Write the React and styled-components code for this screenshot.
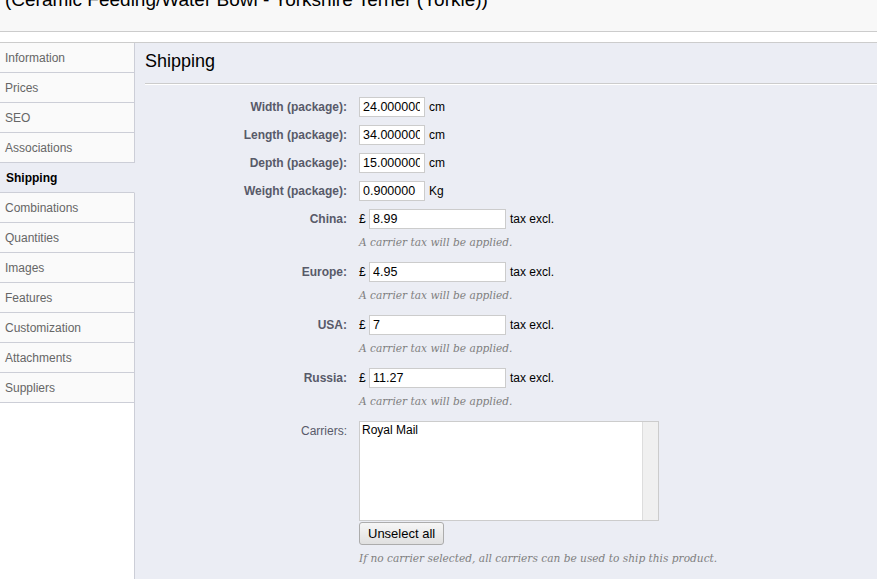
import styled, { createGlobalStyle } from "styled-components";

const GlobalStyle = createGlobalStyle`
  html, body {
    margin: 0;
    padding: 0;
    background: #fff;
  }
  body {
    font-family: "Liberation Sans", Arial, sans-serif;
    color: #000;
  }
`;

const tabs = [
  "Information",
  "Prices",
  "SEO",
  "Associations",
  "Shipping",
  "Combinations",
  "Quantities",
  "Images",
  "Features",
  "Customization",
  "Attachments",
  "Suppliers",
];

const dimensions = [
  { label: "Width (package):", value: "24.000000", unit: "cm" },
  { label: "Length (package):", value: "34.000000", unit: "cm" },
  { label: "Depth (package):", value: "15.000000", unit: "cm" },
  { label: "Weight (package):", value: "0.900000", unit: "Kg" },
];

const zones = [
  { label: "China:", value: "8.99" },
  { label: "Europe:", value: "4.95" },
  { label: "USA:", value: "7" },
  { label: "Russia:", value: "11.27" },
];

export default function App() {
  return (
    <>
      <GlobalStyle />
      <Page>
        <Toolbar>
          <Title>(Ceramic Feeding/Water Bowl - Yorkshire Terrier (Yorkie))</Title>
        </Toolbar>
        <Gap />
        <Body>
          <Sidebar>
            {tabs.map((t) => (
              <Tab key={t} $active={t === "Shipping"}>
                {t}
              </Tab>
            ))}
            <SidebarFill />
          </Sidebar>
          <Main>
            <Heading>Shipping</Heading>
            <Form>
              {dimensions.map((d) => (
                <Row key={d.label}>
                  <Label>{d.label}</Label>
                  <Field>
                    <Line>
                      <Input $width={66} defaultValue={d.value} />
                      <Unit>{d.unit}</Unit>
                    </Line>
                  </Field>
                </Row>
              ))}
              {zones.map((z) => (
                <Row key={z.label}>
                  <Label>{z.label}</Label>
                  <Field>
                    <Line>
                      <Currency>£</Currency>
                      <Input $width={137} defaultValue={z.value} />
                      <Unit>tax excl.</Unit>
                    </Line>
                    <Hint>A carrier tax will be applied.</Hint>
                  </Field>
                </Row>
              ))}
              <Row>
                <Label $regular>Carriers:</Label>
                <Field>
                  <ListBox>
                    <Options>
                      <Option>Royal Mail</Option>
                    </Options>
                    <Track />
                  </ListBox>
                  <Button type="button">Unselect all</Button>
                  <Hint $tight>
                    If no carrier selected, all carriers can be used to ship this product.
                  </Hint>
                </Field>
              </Row>
            </Form>
          </Main>
        </Body>
      </Page>
    </>
  );
}

const Page = styled.div`
  width: 100%;
  height: 579px;
  overflow: hidden;
  display: flex;
  flex-direction: column;
`;

const Toolbar = styled.div`
  height: 31px;
  background: #f8f8f8;
  border-bottom: 1px solid #cccccc;
  overflow: hidden;
  flex-shrink: 0;
`;

const Title = styled.h1`
  margin: -11px 0 0 5px;
  font-size: 19px;
  font-weight: normal;
  line-height: 22px;
  color: #000;
  white-space: nowrap;
`;

const Gap = styled.div`
  height: 10px;
  background: #fff;
  border-bottom: 1px solid #cccccc;
  flex-shrink: 0;
`;

const Body = styled.div`
  flex: 1;
  display: flex;
  min-height: 0;
`;

const Sidebar = styled.div`
  width: 135px;
  flex-shrink: 0;
  display: flex;
  flex-direction: column;
  background: #fff;
`;

const Tab = styled.div`
  height: 28px;
  padding-top: 1px;
  line-height: 28px;
  padding-left: ${(p) => (p.$active ? "6px" : "5px")};
  font-size: 12px;
  color: ${(p) => (p.$active ? "#000" : "#666")};
  font-weight: ${(p) => (p.$active ? "bold" : "normal")};
  background: ${(p) => (p.$active ? "#ebedf4" : "#fafafa")};
  border-bottom: 1px solid #ccced7;
  border-right: 1px solid ${(p) => (p.$active ? "#ebedf4" : "#ccced7")};
`;

const SidebarFill = styled.div`
  flex: 1;
  border-right: 1px solid #ccced7;
`;

const Main = styled.div`
  flex: 1;
  background: #ebedf4;
  padding-left: 10px;
`;

const Heading = styled.h2`
  margin: 0;
  padding: 7px 0 11px;
  font-size: 18px;
  line-height: 22px;
  font-weight: normal;
  color: #000;
  border-bottom: 1px solid #cccccc;
  box-shadow: 0 1px 0 #fff;
`;

const Form = styled.div`
  padding-top: 13px;
  display: grid;
  grid-template-columns: 202px 1fr;
  column-gap: 12px;
  row-gap: 8px;
`;

const Row = styled.div`
  display: contents;
`;

const Label = styled.div`
  text-align: right;
  font-size: 12px;
  font-weight: ${(p) => (p.$regular ? "normal" : "bold")};
  color: #585a69;
  line-height: 20px;
`;

const Field = styled.div`
  display: flex;
  flex-direction: column;
  align-items: flex-start;
`;

const Line = styled.div`
  display: flex;
  align-items: center;
  height: 20px;
`;

const Input = styled.input`
  box-sizing: border-box;
  width: ${(p) => p.$width}px;
  height: 20px;
  margin: 0;
  padding: 0 4px 0 3px;
  border: 1px solid #cccccc;
  background: #fff;
  font-family: "Liberation Sans", Arial, sans-serif;
  font-size: 12.5px;
  color: #000;
  outline: none;
`;

const Unit = styled.span`
  margin-left: 4px;
  font-size: 12px;
  color: #000;
`;

const Currency = styled.span`
  width: 10px;
  font-size: 12px;
  color: #000;
`;

const Hint = styled.p`
  margin: ${(p) => (p.$tight ? "6px 0 0" : "6px 0 5px")};
  font-family: "DejaVu Serif", Georgia, serif;
  font-style: italic;
  font-size: 10.6px;
  line-height: 14px;
  color: #7f7f7f;
`;

const ListBox = styled.div`
  box-sizing: border-box;
  width: 300px;
  height: 100px;
  border: 1px solid #cccccc;
  background: #fff;
  display: flex;
`;

const Options = styled.div`
  flex: 1;
  padding: 1px 2px;
`;

const Option = styled.div`
  font-size: 12px;
  line-height: 15px;
  color: #000;
`;

const Track = styled.div`
  width: 15px;
  background: #f0f0f0;
  border-left: 1px solid #dddddd;
`;

const Button = styled.button`
  margin-top: 1px;
  height: 23px;
  padding: 0 8px;
  border: 1px solid #acacac;
  border-radius: 3px;
  background: linear-gradient(#f6f6f6, #e0e0e0);
  font-family: "Liberation Sans", Arial, sans-serif;
  font-size: 13px;
  color: #000;
  cursor: pointer;
`;
